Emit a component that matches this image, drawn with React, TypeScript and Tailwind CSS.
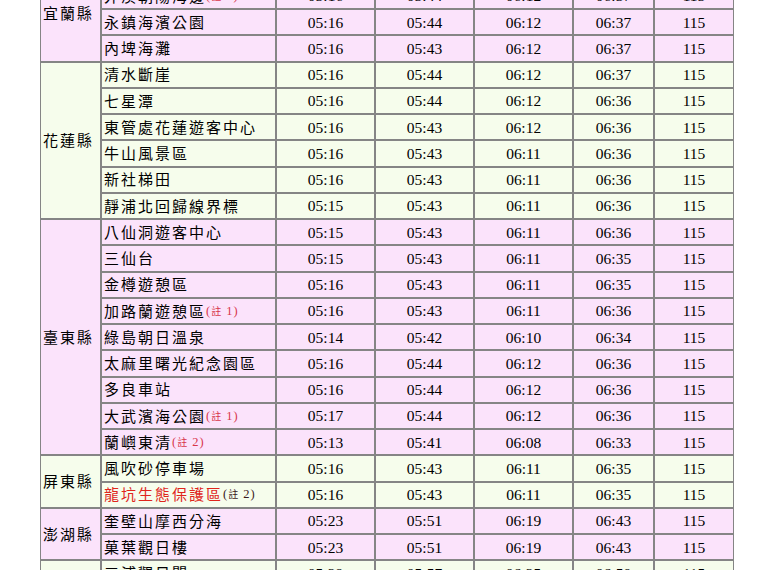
import React from "react";

type Row = { name: React.ReactNode; t: [string, string, string, string, string] };
type County = { county: string; bg: string; span: string; rows: Row[]; labelPad?: string };

const Note = ({ n, dark }: { n: string; dark?: boolean }) => (
  <span
    className={`font-['Liberation_Serif','Noto_Sans_CJK_TC',serif] text-[12.5px] tracking-[1px] ${dark ? "text-[#3a1a1a]" : "text-[#d8364a]"}`}
  >
    (<span className="font-['Noto_Sans_CJK_TC',sans-serif] text-[10px]">註</span> {n})
  </span>
);

const PINK = "bg-[#fbe3fb]";
const GREEN = "bg-[#f6fdec]";

const data: County[] = [
  {
    county: "宜蘭縣",
    bg: PINK,
    span: "row-span-4",
    labelPad: "pt-2",
    rows: [
      { name: "東澳粉鳥林", t: ["05:17", "05:45", "06:13", "06:38", "115"] },
      { name: <>外澳朝陽海邊<Note n="1" /></>, t: ["05:16", "05:44", "06:12", "06:37", "115"] },
      { name: "永鎮海濱公園", t: ["05:16", "05:44", "06:12", "06:37", "115"] },
      { name: "內埤海灘", t: ["05:16", "05:43", "06:12", "06:37", "115"] },
    ],
  },
  {
    county: "花蓮縣",
    bg: GREEN,
    span: "row-span-6",
    rows: [
      { name: "清水斷崖", t: ["05:16", "05:44", "06:12", "06:37", "115"] },
      { name: "七星潭", t: ["05:16", "05:44", "06:12", "06:36", "115"] },
      { name: "東管處花蓮遊客中心", t: ["05:16", "05:43", "06:12", "06:36", "115"] },
      { name: "牛山風景區", t: ["05:16", "05:43", "06:11", "06:36", "115"] },
      { name: "新社梯田", t: ["05:16", "05:43", "06:11", "06:36", "115"] },
      { name: "靜浦北回歸線界標", t: ["05:15", "05:43", "06:11", "06:36", "115"] },
    ],
  },
  {
    county: "臺東縣",
    bg: PINK,
    span: "row-span-9",
    rows: [
      { name: "八仙洞遊客中心", t: ["05:15", "05:43", "06:11", "06:36", "115"] },
      { name: "三仙台", t: ["05:15", "05:43", "06:11", "06:35", "115"] },
      { name: "金樽遊憩區", t: ["05:16", "05:43", "06:11", "06:35", "115"] },
      { name: <>加路蘭遊憩區<Note n="1" /></>, t: ["05:16", "05:43", "06:11", "06:36", "115"] },
      { name: "綠島朝日溫泉", t: ["05:14", "05:42", "06:10", "06:34", "115"] },
      { name: "太麻里曙光紀念園區", t: ["05:16", "05:44", "06:12", "06:36", "115"] },
      { name: "多良車站", t: ["05:16", "05:44", "06:12", "06:36", "115"] },
      { name: <>大武濱海公園<Note n="1" /></>, t: ["05:17", "05:44", "06:12", "06:36", "115"] },
      { name: <>蘭嶼東清<Note n="2" /></>, t: ["05:13", "05:41", "06:08", "06:33", "115"] },
    ],
  },
  {
    county: "屏東縣",
    bg: GREEN,
    span: "row-span-2",
    rows: [
      { name: "風吹砂停車場", t: ["05:16", "05:43", "06:11", "06:35", "115"] },
      {
        name: (
          <>
            <span className="text-[#e0261c]">龍坑生態保護區</span>
            <Note n="2" dark />
          </>
        ),
        t: ["05:16", "05:43", "06:11", "06:35", "115"],
      },
    ],
  },
  {
    county: "澎湖縣",
    bg: PINK,
    span: "row-span-2",
    rows: [
      { name: "奎壁山摩西分海", t: ["05:23", "05:51", "06:19", "06:43", "115"] },
      { name: "菓葉觀日樓", t: ["05:23", "05:51", "06:19", "06:43", "115"] },
    ],
  },
  {
    county: "金門縣",
    bg: GREEN,
    span: "row-span-2",
    rows: [
      { name: "三浦觀日閣", t: ["05:29", "05:57", "06:25", "06:50", "115"] },
      { name: "馬山觀測站", t: ["05:29", "05:57", "06:25", "06:50", "115"] },
    ],
  },
];

export default function App() {
  return (
    <div className="w-[774px] h-[570px] overflow-hidden bg-white">
      <div className="ml-[40px] mt-[-43.5px] w-[694px] grid grid-cols-[61px_175px_99px_99px_99px_81px_80px] auto-rows-[26.25px] text-black">
        {data.map((c) => (
          <React.Fragment key={c.county}>
            <div
              className={`${c.span} ${c.bg} border border-[#858585] flex items-center pl-[2px] font-['Noto_Sans_CJK_TC','Noto_Sans_CJK_JP',sans-serif] text-[15px] tracking-[2px] ${c.labelPad ?? ""}`}
            >
              {c.county}
            </div>
            {c.rows.map((r, i) => (
              <React.Fragment key={i}>
                <div
                  className={`${c.bg} border border-[#858585] flex items-center pl-[2px] font-['Noto_Sans_CJK_TC','Noto_Sans_CJK_JP',sans-serif] text-[15px] tracking-[2px] whitespace-nowrap overflow-hidden`}
                >
                  {r.name}
                </div>
                {r.t.map((v, j) => (
                  <div
                    key={j}
                    className={`${c.bg} border border-[#858585] flex items-center justify-center font-['Liberation_Serif','Times_New_Roman',serif] text-[15.5px]`}
                  >
                    {v}
                  </div>
                ))}
              </React.Fragment>
            ))}
          </React.Fragment>
        ))}
      </div>
    </div>
  );
}
